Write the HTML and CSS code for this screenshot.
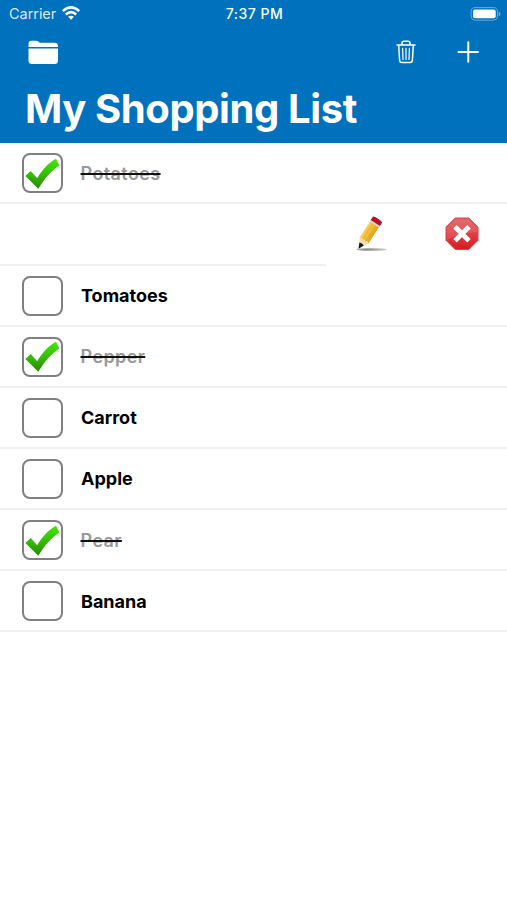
FILE: index.html
```
<!DOCTYPE html>
<html lang="en">
<head>
<meta charset="utf-8">
<title>My Shopping List</title>
<link rel="stylesheet" href="styles.css">
</head>
<body>
<svg class="defs" aria-hidden="true">
  <defs>
    <linearGradient id="green" x1="0" y1="0" x2="0" y2="1"><stop offset="0" stop-color="#45e800"/><stop offset=".5" stop-color="#36bd08"/><stop offset="1" stop-color="#2b8703"/></linearGradient>
    <linearGradient id="red" x1="0" y1="0" x2="0" y2="1"><stop offset="0" stop-color="#dc5c60"/><stop offset=".45" stop-color="#e24347"/><stop offset="1" stop-color="#d71920"/></linearGradient>
    <linearGradient id="wood" x1="0" y1="0" x2="1" y2="0"><stop offset="0" stop-color="#f8d257"/><stop offset=".5" stop-color="#f3bc35"/><stop offset="1" stop-color="#e0a01e"/></linearGradient>
    <linearGradient id="shade"><stop offset="0" stop-color="#bbb"/><stop offset=".3" stop-color="#888"/><stop offset="1" stop-color="#ccc"/></linearGradient>
    <symbol id="check" viewBox="0 0 40 40"><path d="M3.3 22 8.7 17.1 15.2 24.2C20.3 15.5 26 9.2 34 4.7L37.3 11.4C28.6 17.3 22.5 24.7 16.3 34.7Z" fill="url(#green)"/></symbol>
  </defs>
</svg>
<header class="header">
  <div class="status">
    <div class="carrier"><span class="carrier-name">Carrier</span>
      <svg class="wifi" width="18" height="14" viewBox="0 0 18 14" fill="none" stroke="#fff" stroke-width="2.5"><path d="M.8 5.1Q9-2.4 17.2 5.1M3.8 8.5Q9 3.8 14.2 8.5"/><path d="M9 13.8 6.1 10.8Q9 8.5 11.9 10.8Z" fill="#fff" stroke="none"/></svg>
    </div>
    <span class="time">7:37 PM</span>
    <svg class="battery" width="31" height="14" viewBox="0 0 31 14"><rect x="1.1" y=".6" width="26.4" height="12.6" rx="4" fill="none" stroke="#68a8dc" stroke-width="1"/><rect x="3" y="2.5" width="22.7" height="8.8" rx="2" fill="#fff"/><path d="M28.7 4.6Q30.5 5.3 30.5 6.9T28.7 9.2Z" fill="#68a8dc"/></svg>
  </div>
  <nav class="toolbar">
    <svg class="folder" width="31" height="25" viewBox="0 0 31 25" fill="#fff"><path d="M.5 7V3.6Q.5.7 3.4.7H8Q9.4.7 10.4 1.6L11.2 2.3Q12 2.8 13 2.8H26.4Q30 2.8 30 6.2V7Z"/><path d="M.5 8.5H30V20.5Q30 24 26.5 24H4Q.5 24 .5 20.5Z"/></svg>
    <svg class="trash" width="20" height="25" viewBox="0 0 20 25" fill="none" stroke="#fff" stroke-width="1.5" stroke-linecap="round" stroke-linejoin="round"><path d="M1 5H19M6 5V3.3Q6 1.2 8 1.2H12Q14 1.2 14 3.3V5M2.7 5.2 3.6 20.3Q3.7 22.6 6 22.6H14Q16.3 22.6 16.4 20.3L17.3 5.2"/><path d="M6.6 8.4 7 19.4M10 8.4V19.4M13.4 8.4 13 19.4" stroke-width="1.2"/></svg>
    <svg class="plus" width="22" height="22" viewBox="0 0 22 22" stroke="#fff" stroke-width="2" stroke-linecap="round"><path d="M11.3 1.2V20.8M1.5 11H21"/></svg>
  </nav>
  <h1 class="title">My Shopping List</h1>
</header>
<main class="list">
  <div class="row done"><span class="box"><svg class="tick"><use href="#check"/></svg></span><span class="name">Potatoes</span></div>
  <div class="row swiped">
    <svg class="pencil" width="32" height="36" viewBox="0 0 32 36"><ellipse cx="15.5" cy="33.5" rx="15.5" ry="1.3" fill="url(#shade)"/><g transform="translate(2.8 32.3) rotate(33)"><path d="M0 0-5.2-9.8H5.2Z" fill="#f5dda8"/><path d="M0 .6-2.7-5.2Q0-6.4 2.7-5.2Z" fill="#171c1c"/><path d="M-5.2-9.3V-29H5.4V-9.3Q3.3-11 1.7-9.4 0-11-1.6-9.4-3-11-5.2-9.3Z" fill="url(#wood)"/><path d="M-1.8-10V-29M1.9-10V-29" stroke="#dda32c" stroke-width=".6"/><path d="M-5.4-28.5H5.6V-30.7H-5.4Z" fill="#ded4d4"/><path d="M-5.4-30.3V-34Q-5.4-35.3 0-35.3T5.6-34V-30.3Z" fill="#b5122b"/></g></svg>
    <svg class="delete" width="34" height="34" viewBox="0 0 34 34"><path d="M10.2 1H23.8L33 10.2V23.3L23.8 32.5H10.2L1 23.3V10.2Z" fill="url(#red)" stroke="#d8494d" stroke-width="1"/><path d="M10.7 2H23.3L32 10.7V15Q17 15 2 23V10.7Z" fill="#fff" opacity=".1"/><path d="M10 9.7 24 23.7M24 9.7 10 23.7" stroke="#fff" stroke-width="4.8"/></svg>
  </div>
  <div class="row"><span class="box"></span><span class="name">Tomatoes</span></div>
  <div class="row done"><span class="box"><svg class="tick"><use href="#check"/></svg></span><span class="name">Pepper</span></div>
  <div class="row"><span class="box"></span><span class="name">Carrot</span></div>
  <div class="row"><span class="box"></span><span class="name">Apple</span></div>
  <div class="row done"><span class="box"><svg class="tick"><use href="#check"/></svg></span><span class="name">Pear</span></div>
  <div class="row"><span class="box"></span><span class="name">Banana</span></div>
</main>
</body>
</html>
```
FILE: styles.css
```
* { box-sizing: border-box; }
body { margin: 0; min-height: 900px; background: #fff; color: #000; font-family: Inter, "Liberation Sans", sans-serif; }
svg { display: block; flex: none; }
.defs { width: 0; height: 0; position: absolute; }
.header { height: 142.5px; background: #0071bc; color: #fff; }
.status { display: grid; grid-template-columns: 1fr auto 1fr; align-items: center; height: 27px; padding: 0 6px 0 9px; line-height: 27px; }
.carrier { display: flex; align-items: center; gap: 6px; color: #d9eafa; }
.carrier-name { font-size: 14.5px; letter-spacing: -.05px; }
.wifi { margin-top: -1px; }
.time { font-size: 14px; font-weight: 500; letter-spacing: .5px; margin-left: -1px; }
.battery { justify-self: end; }
.toolbar { display: flex; align-items: center; height: 50px; padding: 0 28px; }
.trash { margin-left: auto; margin-right: 41px; }
.title { margin: 8px 0 0 25px; font-size: 40px; line-height: 48px; font-weight: 700; letter-spacing: -.4px; white-space: nowrap; }
.list { padding-top: .9px; }
.row { display: flex; align-items: center; height: 61.1px; padding: 1px 0 0 22px; border-bottom: 2px solid #f0f0f0; }
.box { flex: none; width: 41px; height: 40px; border: 2px solid #808080; border-radius: 8px; }
.tick { width: 40px; height: 40px; margin: -1.3px 0 0 -2px; }
.name { margin-left: 18px; padding-top: 1px; font-size: 18px; line-height: 24px; font-weight: 700; }
.done .name { margin-left: 17.5px; font-weight: 600; letter-spacing: .4px; color: #999; text-decoration: line-through #111 2px; text-decoration-skip-ink: none; }
.swiped { justify-content: flex-end; padding: 0 28px 0 0; border-bottom-color: transparent; background: linear-gradient(#f0f0f0, #f0f0f0) 0 100% / 326px 2px no-repeat border-box; }
.pencil { margin-right: 57px; }
```
